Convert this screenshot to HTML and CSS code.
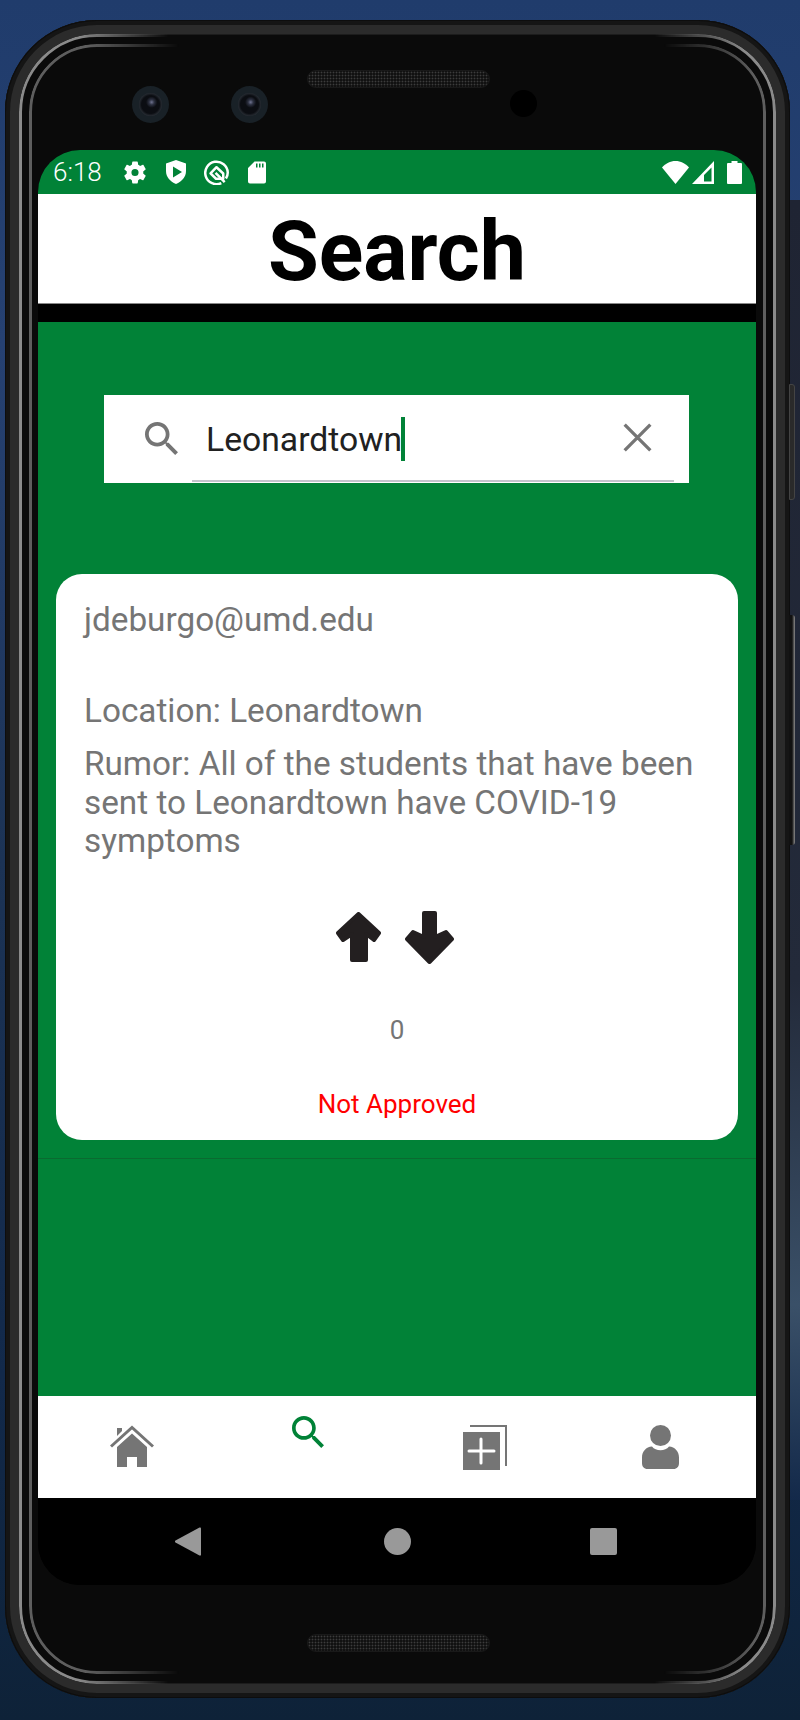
FILE: index.html
```html
<!DOCTYPE html>
<html lang="en">
  <head>
    <meta charset="UTF-8" />
    <meta name="viewport" content="width=device-width, initial-scale=1.0" />
    <title>Search</title>
    <link rel="stylesheet" href="styles.css">
  </head>
  <body>
    <div class="phone">
      <div class="side-btn power"></div>
      <div class="side-btn volume"></div>

      <div class="bezel-top">
        <div class="camera"><span></span></div>
        <div class="camera second"><span></span></div>
        <div class="speaker"></div>
        <div class="sensor"></div>
      </div>

      <div class="screen">
        <!-- Status bar -->
        <div class="status-bar">
          <span class="time">6:18</span>
          <svg class="st-gear" viewBox="2.5 2 19 20"><path fill="#fff" d="M19.14 12.94c.04-.3.06-.61.06-.94 0-.32-.02-.64-.07-.94l2.03-1.58c.18-.14.23-.41.12-.61l-1.92-3.32c-.12-.22-.37-.29-.59-.22l-2.39.96c-.5-.38-1.03-.7-1.62-.94l-.36-2.54c-.04-.24-.24-.41-.48-.41h-3.84c-.24 0-.43.17-.47.41l-.36 2.54c-.59.24-1.13.57-1.62.94l-2.39-.96c-.22-.08-.47 0-.59.22L2.74 8.87c-.12.21-.08.47.12.61l2.03 1.58c-.05.3-.09.63-.09.94s.02.64.07.94l-2.03 1.58c-.18.14-.23.41-.12.61l1.92 3.32c.12.22.37.29.59.22l2.39-.96c.5.38 1.03.7 1.62.94l.36 2.54c.05.24.24.41.48.41h3.84c.24 0 .44-.17.47-.41l.36-2.54c.59-.24 1.13-.56 1.62-.94l2.39.96c.22.08.47 0 .59-.22l1.92-3.32c.12-.22.07-.47-.12-.61l-2.01-1.58zM12 15.100a3.100 3.100 0 1 1 0-6.200 3.100 3.100 0 0 1 0 6.200z"/></svg>
          <svg class="st-shield" viewBox="0 0 20 24"><path fill="#fff" fill-rule="evenodd" d="M10 0 20 3.500V11c0 6-4 10.500-10 13C4 21.500 0 17 0 11V3.500zM7 6.500v11l9-5.500z"/></svg>
          <svg class="st-q" viewBox="0 0 26 26"><g fill="none" stroke="#fff" stroke-width="2.600" stroke-linejoin="round"><path d="M18 24A11.700 11.700 0 1 1 24.700 13c0 2.400-.7 4.500-1.900 6.300"/><path d="M13 7.500 6.800 13.800 12.500 19.500H20V14z"/><path d="M12 13.500 18.500 20 21.500 23"/></g></svg>
          <svg class="st-sd" viewBox="0 0 18 22"><path fill="#fff" fill-rule="evenodd" d="M6.500 0H16a2 2 0 0 1 2 2v18a2 2 0 0 1-2 2H2a2 2 0 0 1-2-2V6.500zM8 2v4h1.500V2zm3 0v4h1.500V2zm3 0v4h1.500V2z"/></svg>
          <span class="status-space"></span>
          <svg class="st-wifi" viewBox="0 0 27 23"><path fill="#fff" d="M13.500 23 0 6.500C3.500 2.500 8.300 0 13.500 0S23.500 2.500 27 6.500z"/></svg>
          <svg class="st-signal" viewBox="0 0 22 23"><path fill="#fff" fill-rule="evenodd" d="M22 0v23H0zM19.500 6.500 12 14v6.500h7.500z"/></svg>
          <svg class="st-battery" viewBox="0 0 15 23"><path fill="#fff" d="M4.500 0h6v2H14a1 1 0 0 1 1 1v19a1 1 0 0 1-1 1H1a1 1 0 0 1-1-1V3a1 1 0 0 1 1-1h3.500z"/></svg>
        </div>

        <div class="title-bar">
          <h1>Search</h1>
        </div>

        <div class="content">
          <!-- Search field -->
          <div class="search-box">
            <svg class="search-icon" viewBox="3 3 17.500 17.500"><path fill="#757575" d="M15.500 14h-.79l-.28-.27C15.410 12.590 16 11.110 16 9.500 16 5.910 13.090 3 9.500 3S3 5.910 3 9.500 5.910 16 9.500 16c1.610 0 3.090-.59 4.230-1.570l.27.28v.79l5 4.990L20.490 19l-4.990-5zm-6 0C7.010 14 5 11.990 5 9.500S7.010 5 9.500 5 14 7.010 14 9.500 11.990 14 9.500 14z"/></svg>
            <div class="search-input">
              <span class="search-text">Leonardtown</span><span class="cursor"></span>
            </div>
            <svg class="close-icon" viewBox="5 5 14 14"><path fill="none" stroke="#757575" stroke-width="1.600" d="M5.800 5.800 18.200 18.200M18.200 5.800 5.800 18.200"/></svg>
          </div>

          <!-- Result card -->
          <div class="card">
            <p class="email">jdeburgo@umd.edu</p>
            <p class="location">Location: Leonardtown</p>
            <p class="rumor">Rumor: All of the students that have been sent to Leonardtown have COVID-19 symptoms</p>
            <div class="votes">
              <svg class="arrow-up" viewBox="0 0 45 50"><path fill="#231f20" stroke="#231f20" stroke-width="4" stroke-linejoin="round" d="M22.500 2 43 21 38 28 30 22V48H16V22L7 28 2 21z"/></svg>
              <svg class="arrow-down" viewBox="0 0 49 53"><path fill="#231f20" stroke="#231f20" stroke-width="4" stroke-linejoin="round" d="M19 2H30V26L41 21 47 28 24.500 51 2 28 8 21 19 26z"/></svg>
            </div>
            <p class="score">0</p>
            <p class="status">Not Approved</p>
          </div>
          <div class="divider"></div>
        </div>

        <!-- Bottom tabs -->
        <div class="tab-bar">
          <div class="tab">
            <svg class="tab-home" viewBox="0 0 44 42"><path fill="#757575" d="M7 22 22 8.500 37 22v20H27V32H17v10H7z"/><path fill="none" stroke="#757575" stroke-width="3" d="M1 21.500 22 2.500 43 21.500"/><path fill="#757575" d="M7 3h5v3l-5 5z"/></svg>
          </div>
          <div class="tab tab-active">
            <svg class="tab-search" viewBox="3 3 17.500 17.500"><path fill="#018237" d="M15.500 14h-.79l-.28-.27C15.410 12.590 16 11.110 16 9.500 16 5.910 13.090 3 9.500 3S3 5.910 3 9.500 5.910 16 9.500 16c1.610 0 3.090-.59 4.230-1.570l.27.28v.79l5 4.990L20.490 19l-4.990-5zm-6 0C7.010 14 5 11.990 5 9.500S7.010 5 9.500 5 14 7.010 14 9.500 11.990 14 9.500 14z"/></svg>
          </div>
          <div class="tab">
            <svg class="tab-add" viewBox="0 0 44 45"><path fill="#757575" d="M7 0h37v41h-2V2H7z"/><path fill="#757575" d="M0 7h37v38H0z"/><path fill="none" stroke="#fff" stroke-width="3" stroke-linecap="round" d="M18 14v24M6 26h25"/></svg>
          </div>
          <div class="tab">
            <svg class="tab-user" viewBox="0 0 37 44"><circle fill="#757575" cx="18.500" cy="10.500" r="10.500"/><path fill="#757575" d="M10 21.500c2 2.500 5 3.700 8.500 3.700s6.500-1.200 8.500-3.700c6 .5 10 5 10 11V38c0 3.500-2 6-5.500 6h-26C2 44 0 41.500 0 38v-5.500c0-6 4-10.500 10-11z"/></svg>
          </div>
        </div>

        <!-- Android buttons -->
        <div class="nav-bar">
          <svg class="nav-back" viewBox="0 0 26 29"><path fill="#999" d="M25 .5c.6 0 1 .5 1 1v26c0 .6-.4 1.500-1.500 1L.5 15.500c-.7-.4-.7-1.500 0-2L24.500.5z"/></svg>
          <span class="nav-home"></span>
          <span class="nav-square"></span>
        </div>
      </div>

      <div class="bezel-bottom">
        <div class="speaker"></div>
      </div>
    </div>
  </body>
</html>
```

FILE: styles.css
```css
/* Basic styling */
* {
  margin: 0;
  padding: 0;
  box-sizing: border-box;
}
body {
  width: 800px;
  height: 1720px;
  overflow: hidden;
  padding: 20px 0 0 5px;
  font-family: Roboto, sans-serif;
  background:
    linear-gradient(180deg, #1f2433, #232a3a 60%, #3a5068 85%, #13294a) right 200px / 10px 1300px no-repeat,
    linear-gradient(180deg, #203c6c 0%, #264172 20%, #1c3355 50%, #12294a 80%, #0e2238 100%);
}

/* Device frame */
.phone {
  position: relative;
  width: 785px;
  height: 1678px;
  padding: 0 33px;
  border-radius: 92px;
  background-color: #0a0a0a;
  box-shadow:
    inset 0 0 0 1px #0d0d0d,
    inset 0 0 0 5px #151515,
    inset 0 0 0 14px #2b2b2b,
    inset 0 0 0 15px #1c1c1c;
}
/* shiny rings, only along the sides and corners */
.phone::before,
.phone::after {
  content: "";
  position: absolute;
  border-style: solid;
  -webkit-mask-image: linear-gradient(90deg, #000 60px, transparent 150px, transparent 635px, #000 725px);
  mask-image: linear-gradient(90deg, #000 60px, transparent 150px, transparent 635px, #000 725px);
}
.phone::before {
  inset: 14px;
  border-width: 3px;
  border-color: #8a8a8a;
  border-radius: 78px;
}
.phone::after {
  inset: 24px;
  border-width: 3px;
  border-color: #5e5e5e;
  border-radius: 68px;
}
.side-btn {
  position: absolute;
  left: 784px;
  width: 6px;
  border-radius: 0 3px 3px 0;
}
.power {
  top: 364px;
  height: 116px;
  background-color: #2a2a2a;
  border: 1px solid #444;
}
.volume {
  top: 595px;
  height: 230px;
  background: linear-gradient(90deg, #111 0, #111 50%, #8a8a8a 100%);
}
.bezel-top {
  height: 130px;
  display: flex;
  align-items: flex-start;
  padding: 66px 0 0 94px;
}
.camera {
  width: 37px;
  height: 37px;
  border-radius: 50%;
  background-color: #192127;
  display: flex;
  align-items: center;
  justify-content: center;
}
.camera span {
  width: 23px;
  height: 23px;
  border-radius: 50%;
  background:
    radial-gradient(circle at 55% 40%, #6f7390 0, #2c3040 14%, transparent 30%),
    radial-gradient(circle at 50% 50%, #0b0d12 0, #0b0d12 55%, #343a42 78%, #0e1114 100%);
}
.camera.second {
  margin-left: 62px;
}
.speaker {
  width: 183px;
  height: 18px;
  border-radius: 9px;
  border: 1px solid #191919;
  background-color: #111;
  background-image: radial-gradient(circle, #3c3c3c 0.8px, transparent 1.1px);
  background-size: 3px 3px;
}
.bezel-top .speaker {
  margin: -16px 0 0 39px;
}
.sensor {
  width: 27px;
  height: 27px;
  border-radius: 50%;
  margin: 4px 0 0 20px;
  background-color: #000;
}
.bezel-bottom {
  display: flex;
  justify-content: center;
  padding: 49px 0 0 2px;
}

/* Screen */
.screen {
  width: 718px;
  height: 1435px;
  border-radius: 42px;
  overflow: hidden;
  background-color: #000;
  display: flex;
  flex-direction: column;
}
.status-bar {
  height: 44px;
  flex: none;
  background-color: #018237;
  display: flex;
  align-items: center;
  padding: 0 14px 0 15px;
  color: #fff;
}
.time {
  font-size: 26px;
  font-weight: 300;
  width: 71px;
}
.status-bar svg {
  display: block;
  height: 23px;
}
.st-gear {
  width: 22px;
}
.status-bar .st-shield {
  width: 20px;
  height: 24px;
  margin-left: 20px;
}
.status-bar .st-q {
  width: 25px;
  height: 25px;
  margin-left: 18px;
}
.st-sd {
  width: 18px;
  margin-left: 19px;
}
.status-space {
  flex: 1;
}
.st-wifi {
  width: 27px;
}
.st-signal {
  width: 22px;
  margin-left: 3px;
}
.st-battery {
  width: 15px;
  margin-left: 13px;
}
.title-bar {
  height: 110px;
  flex: none;
  background-color: #fff;
  border-bottom: 1px solid #888;
  text-align: center;
}
h1 {
  font-size: 82.5px;
  font-weight: 700;
  padding-top: 6px;
  line-height: 104px;
  color: #000;
}
.content {
  flex: 1;
  margin-top: 18px;
  background-color: #018237;
  padding-top: 73px;
}

/* Search field */
.search-box {
  width: 585px;
  height: 88px;
  margin-left: 66px;
  background-color: #fff;
  display: flex;
  align-items: flex-start;
  padding-left: 41px;
}
.search-icon {
  width: 33px;
  height: 33px;
  margin-top: 27px;
  flex: none;
}
.search-input {
  width: 482px;
  height: 87px;
  margin-left: 14px;
  padding: 23px 0 0 14px;
  border-bottom: 2px solid #c4c4cc;
  display: flex;
  align-items: flex-start;
}
.search-text {
  font-size: 33.7px;
  line-height: 44px;
  color: #212121;
}
.cursor {
  width: 4px;
  height: 44px;
  margin: -1px 0 0 -1px;
  background-color: #018237;
}
.close-icon {
  width: 29px;
  height: 29px;
  flex: none;
  margin: 28px 0 0 -51px;
}

/* Result card */
.card {
  width: 682px;
  height: 566px;
  margin: 91px 0 0 18px;
  padding: 25px 28px 0;
  border-radius: 26px;
  background-color: #fff;
  color: #757575;
  font-size: 33.3px;
}
.email {
  line-height: 42px;
}
.location {
  line-height: 42px;
  margin-top: 49px;
}
.rumor {
  line-height: 38.5px;
  margin-top: 13px;
}
.votes {
  display: flex;
  justify-content: center;
  align-items: flex-start;
  gap: 24px;
  margin-top: 50px;
  padding-right: 4px;
}
.arrow-up {
  width: 45px;
  height: 50px;
  margin-top: 1px;
}
.arrow-down {
  width: 49px;
  height: 53px;
}
.score {
  font-size: 26px;
  line-height: 32px;
  text-align: center;
  margin-top: 50px;
}
.status {
  font-size: 26px;
  line-height: 32px;
  text-align: center;
  color: #f00;
  margin-top: 42px;
}
.divider {
  height: 1px;
  margin-top: 18px;
  background-color: #0a6a30;
}

/* Bottom tabs */
.tab-bar {
  height: 102px;
  flex: none;
  background-color: #fff;
  display: flex;
  padding-left: 6px;
}
.tab {
  width: 176px;
  display: flex;
  justify-content: center;
  align-items: flex-start;
  padding-top: 29px;
}
.tab-active {
  padding-top: 20px;
}
.tab-home {
  width: 44px;
  height: 42px;
}
.tab-search {
  width: 32px;
  height: 32px;
}
.tab-add {
  width: 44px;
  height: 45px;
  margin-left: 2px;
}
.tab-user {
  width: 37px;
  height: 44px;
}

/* Android buttons */
.nav-bar {
  flex: none;
  height: 87px;
  background-color: #000;
  display: flex;
  align-items: center;
  padding-left: 137px;
}
.nav-back {
  width: 26px;
  height: 29px;
}
.nav-home {
  width: 27px;
  height: 27px;
  border-radius: 50%;
  background-color: #999;
  margin-left: 183px;
}
.nav-square {
  width: 27px;
  height: 27px;
  border-radius: 2px;
  background-color: #999;
  margin-left: 179px;
}
```
